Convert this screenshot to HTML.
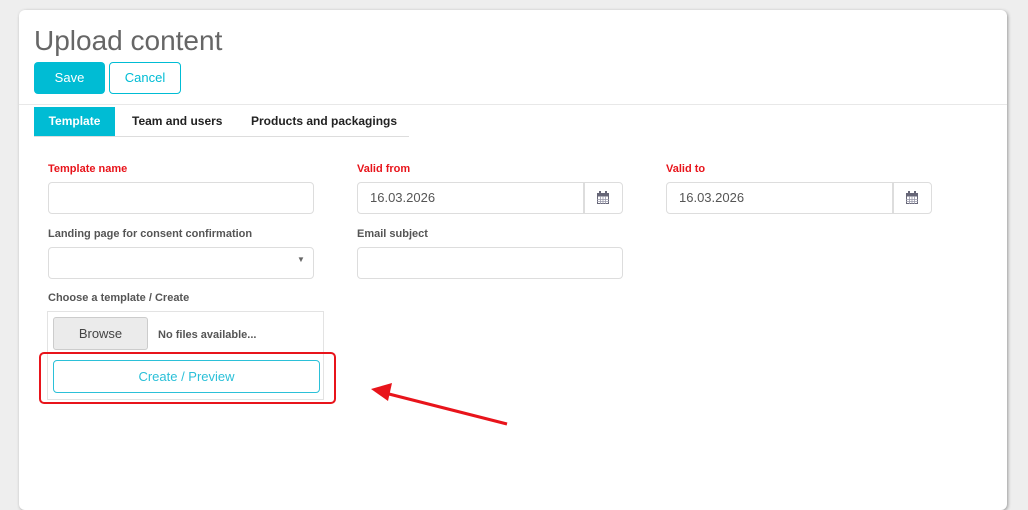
<!DOCTYPE html><html><head><style>
body{margin:0;width:1028px;height:491px;background:#eeeeee;position:relative;overflow:hidden;font-family:"Liberation Sans",sans-serif}
.a{position:absolute}
.card{left:19px;top:10px;width:988px;height:500px;background:#fff;border-radius:6px;box-shadow:1px 1px 3px #999}
.lbl{font-size:11px;font-weight:bold;color:#555}
.red{color:#e8141b}
.inp{border:1px solid #ddd;border-radius:4px;background:#fff;box-sizing:border-box;height:32px;font-size:13px;color:#555;padding-left:12px;line-height:30px}
.cal{border:1px solid #ddd;border-radius:0 4px 4px 0;box-sizing:border-box;height:32px;width:39px}
</style></head><body>
<div class="a card"></div>
<div class="a" style="left:34px;top:25px;font-size:28px;color:#666">Upload content</div>
<div class="a" style="left:34px;top:62px;width:71px;height:32px;background:#00bcd4;border-radius:4px;color:#fff;font-size:13px;text-align:center;line-height:32px">Save</div>
<div class="a" style="left:109px;top:62px;width:72px;height:32px;box-sizing:border-box;border:1px solid #00bcd4;border-radius:4px;color:#00bcd4;font-size:13px;text-align:center;line-height:30px">Cancel</div>
<div class="a" style="left:19px;top:104px;width:988px;height:1px;background:#e8e8e8"></div>
<div class="a" style="left:34px;top:136px;width:375px;height:1px;background:#ddd"></div>
<div class="a" style="left:34px;top:107px;width:81px;height:29px;background:#00bcd4;color:#fff;font-size:12px;font-weight:bold;text-align:center;line-height:29px">Template</div>
<div class="a" style="left:132px;top:114px;font-size:12px;font-weight:bold;color:#222">Team and users</div>
<div class="a" style="left:251px;top:114px;font-size:12px;font-weight:bold;color:#222">Products and packagings</div>
<div class="a lbl red" style="left:48px;top:163px">Template name</div>
<div class="a lbl red" style="left:357px;top:163px">Valid from</div>
<div class="a lbl red" style="left:666px;top:163px">Valid to</div>
<div class="a inp" style="left:48px;top:182px;width:266px"></div>
<div class="a inp" style="left:357px;top:182px;width:227px;border-radius:4px 0 0 4px">16.03.2026</div>
<div class="a cal" style="left:584px;top:182px"></div>
<div class="a inp" style="left:666px;top:182px;width:227px;border-radius:4px 0 0 4px">16.03.2026</div>
<div class="a cal" style="left:893px;top:182px"></div>
<svg class="a" style="left:597px;top:191px" width="12" height="13"><rect x="0.5" y="2.5" width="11" height="10" fill="none" stroke="#667"/><rect x="0.5" y="2.5" width="11" height="3" fill="#667"/><path d="M0 8.5h12M0 10.5h12M3.5 5v8M6 5v8M8.5 5v8" stroke="#99a" stroke-width=".8"/><rect x="2" y="0" width="2" height="3" fill="#667"/><rect x="8" y="0" width="2" height="3" fill="#667"/></svg>
<svg class="a" style="left:906px;top:191px" width="12" height="13"><rect x="0.5" y="2.5" width="11" height="10" fill="none" stroke="#667"/><rect x="0.5" y="2.5" width="11" height="3" fill="#667"/><path d="M0 8.5h12M0 10.5h12M3.5 5v8M6 5v8M8.5 5v8" stroke="#99a" stroke-width=".8"/><rect x="2" y="0" width="2" height="3" fill="#667"/><rect x="8" y="0" width="2" height="3" fill="#667"/></svg>
<div class="a lbl" style="left:48px;top:228px">Landing page for consent confirmation</div>
<div class="a lbl" style="left:357px;top:228px">Email subject</div>
<div class="a inp" style="left:48px;top:247px;width:266px"></div>
<div class="a" style="left:297px;top:255px;font-size:8px;color:#666">▼</div>
<div class="a inp" style="left:357px;top:247px;width:266px"></div>
<div class="a lbl" style="left:48px;top:292px">Choose a template / Create</div>
<div class="a" style="left:47px;top:311px;width:277px;height:89px;border:1px solid #e3e3e3;box-sizing:border-box"></div>
<div class="a" style="left:53px;top:317px;width:95px;height:33px;box-sizing:border-box;background:#ebebeb;border:1px solid #ccc;border-radius:3px;font-size:13px;color:#444;text-align:center;line-height:31px">Browse</div>
<div class="a" style="left:158px;top:329px;font-size:11px;color:#555;font-weight:bold">No files available...</div>
<div class="a" style="left:53px;top:360px;width:267px;height:33px;box-sizing:border-box;border:1px solid #2bc0d8;border-radius:4px;font-size:13px;color:#2bc0d8;text-align:center;line-height:31px">Create / Preview</div>
<div class="a" style="left:39px;top:352px;width:297px;height:52px;box-sizing:border-box;border:2px solid #e8141b;border-radius:5px"></div>
<svg class="a" style="left:0;top:0" width="1028" height="491"><line x1="507" y1="424" x2="385" y2="393" stroke="#e8141b" stroke-width="3"/><polygon points="371,389 392,383 388,401" fill="#e8141b"/></svg>
</body></html>
